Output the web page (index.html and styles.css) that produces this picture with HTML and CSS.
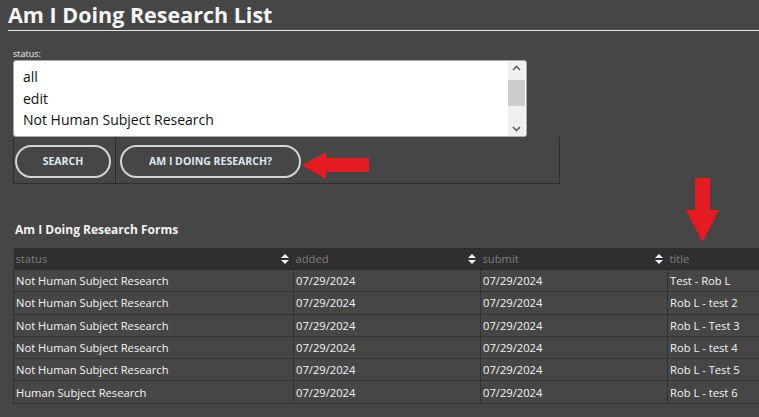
FILE: index.html
```html
<!DOCTYPE html>
<html>
<head>
<meta charset="utf-8">
<link rel="stylesheet" href="styles.css">
</head>
<body>
<h1 class="title">Am I Doing Research List</h1>
<form class="filter">
  <label class="label">status:</label>
  <div class="selectbox">
    <div class="options">
      <div class="opt">all</div>
      <div class="opt">edit</div>
      <div class="opt">Not Human Subject Research</div>
    </div>
    <div class="scrollbar">
      <svg class="sb-arrow" width="17" height="14" viewBox="0 0 17 14"><path d="M5 9 L8.5 5.5 L12 9" fill="none" stroke="#606060" stroke-width="1.6"/></svg>
      <div class="sb-track"><div class="sb-thumb"></div></div>
      <svg class="sb-arrow" width="17" height="14" viewBox="0 0 17 14"><path d="M5 5 L8.5 8.5 L12 5" fill="none" stroke="#606060" stroke-width="1.6"/></svg>
    </div>
  </div>
  <div class="btnrow">
    <div class="cell cell-first"><button type="button" class="pill pill-search">SEARCH</button></div>
    <div class="cell cell-second">
      <button type="button" class="pill pill-research">AM I DOING RESEARCH?</button>
      <svg class="arrow-left" width="70" height="30" viewBox="0 0 70 30"><polygon points="0,14 24,1 24,7 67,7 67,21 24,21 24,28" fill="#e51b24"/></svg>
    </div>
  </div>
</form>
<svg class="arrow-down" width="34" height="66" viewBox="0 0 34 66"><polygon points="9,0 24,0 24,32 33,32 16.5,64 0,32 9,32" fill="#e51b24"/></svg>
<h2 class="subtitle">Am I Doing Research Forms</h2>
<div class="gridwrap">
<table class="grid">
  <thead>
    <tr>
      <th class="c1">status<span class="sort"></span></th>
      <th class="c2">added<span class="sort"></span></th>
      <th class="c3">submit<span class="sort"></span></th>
      <th class="c4">title</th>
    </tr>
  </thead>
  <tbody>
    <tr><td>Not Human Subject Research</td><td>07/29/2024</td><td>07/29/2024</td><td>Test - Rob L</td></tr>
    <tr><td>Not Human Subject Research</td><td>07/29/2024</td><td>07/29/2024</td><td>Rob L - test 2</td></tr>
    <tr><td>Not Human Subject Research</td><td>07/29/2024</td><td>07/29/2024</td><td>Rob L - Test 3</td></tr>
    <tr><td>Not Human Subject Research</td><td>07/29/2024</td><td>07/29/2024</td><td>Rob L - test 4</td></tr>
    <tr><td>Not Human Subject Research</td><td>07/29/2024</td><td>07/29/2024</td><td>Rob L - Test 5</td></tr>
    <tr><td>Human Subject Research</td><td>07/29/2024</td><td>07/29/2024</td><td>Rob L - test 6</td></tr>
  </tbody>
</table>
</div>
</body>
</html>
```
FILE: styles.css
```css
html, body {
  margin: 0;
  padding: 0;
  background: #464646;
  overflow: hidden;
}
body {
  font-family: "Open Sans", "Liberation Sans", sans-serif;
  color: #f2f2f2;
  padding: 0 0 0 8px;
  position: relative;
}
.title {
  margin: 0;
  font-size: 21.5px;
  font-weight: 700;
  line-height: 30px;
  height: 30px;
  color: #f4f4f4;
  border-bottom: 1px solid #e6e6e6;
}
.filter {
  margin: 16px 0 0 5px;
  display: flex;
  flex-direction: column;
  width: 547px;
}
.label {
  font-size: 9px;
  line-height: 13px;
  height: 13px;
  color: #f2f2f2;
}
.selectbox {
  width: 514px;
  height: 77px;
  box-sizing: border-box;
  border: 1px solid #a8a8a8;
  border-radius: 3px;
  background: #fff;
  display: flex;
  overflow: hidden;
}
.options {
  flex: 1;
  padding: 5px 0 0 9px;
}
.opt {
  font-size: 14px;
  line-height: 21.5px;
  color: #111;
}
.scrollbar {
  width: 17px;
  margin-right: 1px;
  background: #f0f0f0;
  display: flex;
  flex-direction: column;
}
.sb-arrow { display: block; flex: none; }
.sb-track {
  flex: 1;
  padding-top: 5px;
}
.sb-thumb {
  height: 26px;
  background: #cdcdcd;
}
.btnrow {
  display: flex;
  height: 47px;
  box-sizing: border-box;
  border: 1px solid #2e2e2e;
  border-top: none;
}
.cell {
  display: flex;
  align-items: center;
}
.cell-first {
  width: 100px;
  border-right: 1px solid #2e2e2e;
  padding-left: 1px;
}
.cell-second {
  flex: 1;
  padding-left: 4px;
  position: relative;
}
.pill {
  height: 33px;
  box-sizing: border-box;
  border: 2px solid #d4d4d4;
  border-radius: 17px;
  background: #464646;
  color: #dfe6ee;
  font-family: "Open Sans", "Liberation Sans", sans-serif;
  font-size: 10.5px;
  font-weight: 700;
  padding: 0;
  margin-top: 2px;
}
.pill-search { width: 96px; }
.pill-research { width: 181px; }
.arrow-left {
  position: absolute;
  left: 186px;
  top: 14px;
}
.arrow-down {
  position: absolute;
  left: 686px;
  top: 178px;
}
.subtitle {
  margin: 38px 0 0 7px;
  font-size: 12px;
  font-weight: 700;
  line-height: 16px;
  color: #f2f2f2;
}
.gridwrap {
  width: 751px;
  overflow: hidden;
}
.grid {
  margin: 10px 0 0 5px;
  border-collapse: collapse;
  table-layout: fixed;
  width: 860px;
  font-size: 11.2px;
}
.grid th {
  background: #2f2f2f;
  color: #7e7e7e;
  font-weight: 400;
  text-align: left;
  height: 22px;
  padding: 0 0 0 2px;
  position: relative;
  line-height: 22px;
}
.grid .c1 { width: 278px; }
.grid .c2 { width: 185px; }
.grid .c3 { width: 185px; }
.sort {
  position: absolute;
  right: 5px;
  top: 6px;
  width: 8px;
  height: 10px;
}
.sort::before, .sort::after {
  content: "";
  position: absolute;
  left: 0;
  border-left: 4px solid transparent;
  border-right: 4px solid transparent;
}
.sort::before {
  top: 0;
  border-bottom: 4px solid #f2f2f2;
}
.sort::after {
  bottom: 0;
  border-top: 4px solid #f2f2f2;
}
.grid td {
  height: 21.3px;
  padding: 0 0 0 2px;
  border: 1px solid #333;
  border-top: none;
  color: #f4f4f4;
  line-height: 21px;
  white-space: nowrap;
}
```
